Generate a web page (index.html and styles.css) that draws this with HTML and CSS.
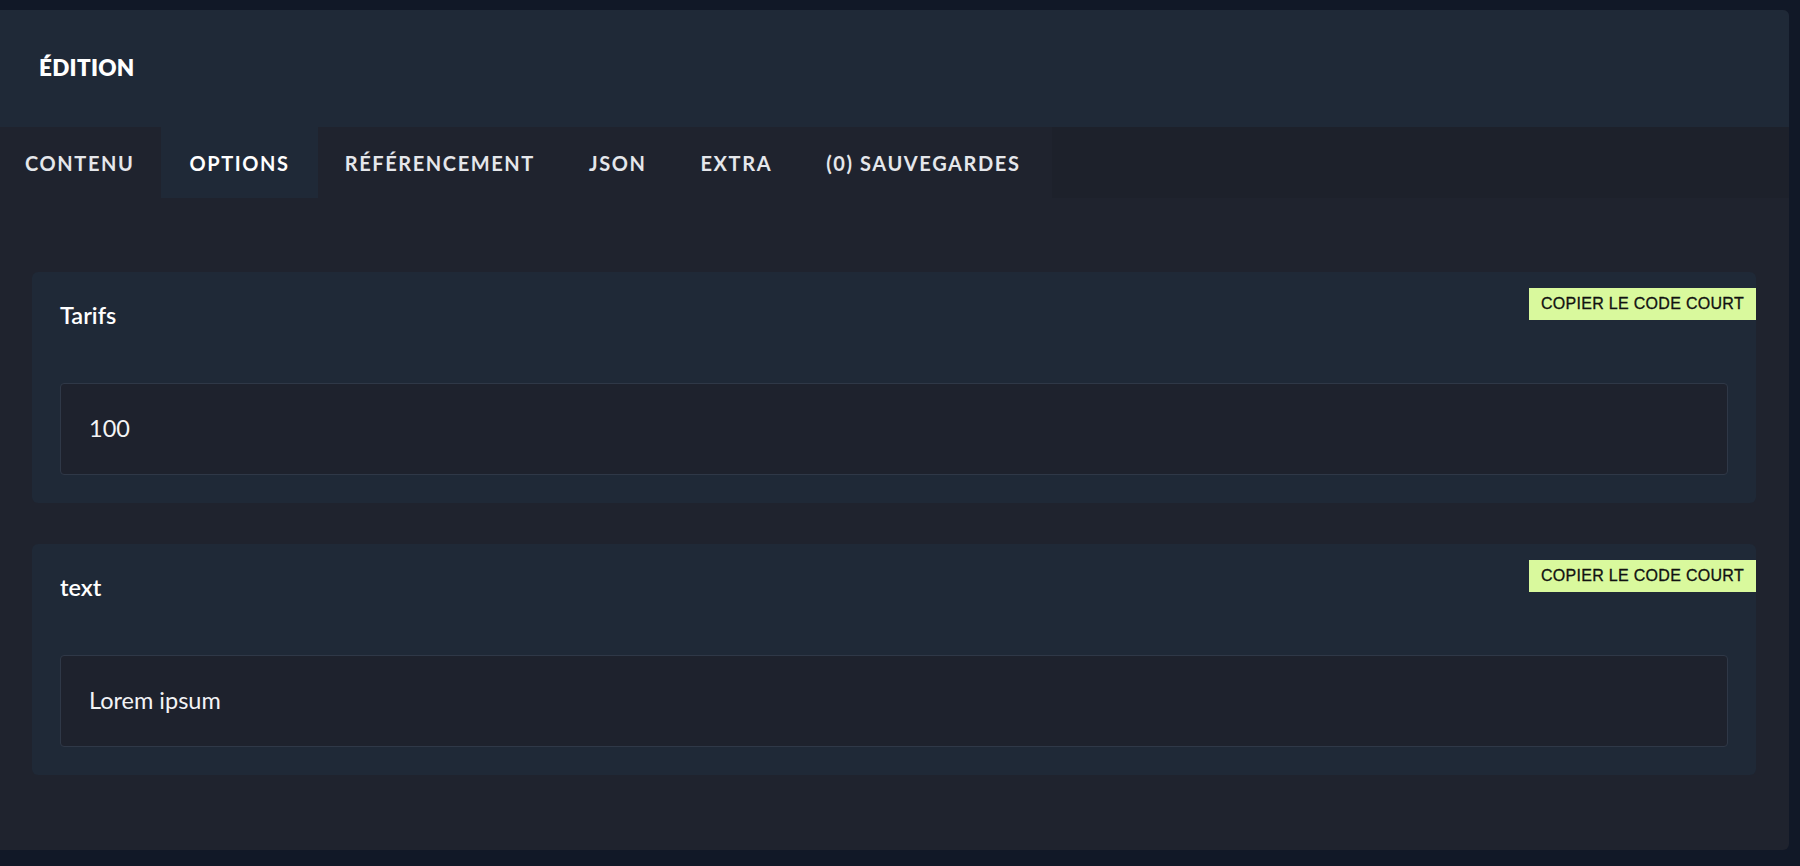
FILE: index.html
```html
<!DOCTYPE html>
<html lang="fr">
<head>
<meta charset="utf-8">
<title>Édition</title>
<link rel="stylesheet" href="styles.css">
</head>
<body>
<div class="panel">
  <div class="panel-header">
    <h1 class="panel-title">ÉDITION</h1>
  </div>
  <div class="tab-row">
    <nav class="tabs">
      <a class="tab">CONTENU</a>
      <a class="tab active">OPTIONS</a>
      <a class="tab">RÉFÉRENCEMENT</a>
      <a class="tab">JSON</a>
      <a class="tab">EXTRA</a>
      <a class="tab">(0) SAUVEGARDES</a>
    </nav>
  </div>
  <div class="content">
    <section class="field-card">
      <div class="field-label">Tarifs</div>
      <button class="copy-btn">COPIER LE CODE COURT</button>
      <div class="field-input">100</div>
    </section>
    <section class="field-card">
      <div class="field-label">text</div>
      <button class="copy-btn">COPIER LE CODE COURT</button>
      <div class="field-input">Lorem ipsum</div>
    </section>
  </div>
</div>
</body>
</html>
```
FILE: styles.css
```css
* { box-sizing: border-box; }
html, body { height: 100%; }
body {
  margin: 0;
  padding: 10px 11px 16px 0;
  background: #111827;
  font-family: Lato, "Open Sans", "Liberation Sans", sans-serif;
  color: #f3f4f6;
}
.panel {
  height: 840px;
  background: #1f232e;
  border-radius: 0 6px 6px 0;
  overflow: hidden;
  display: flex;
  flex-direction: column;
}
.panel-header {
  height: 117px;
  background: #1f2937;
  display: flex;
  align-items: center;
  padding-left: 39px;
  padding-bottom: 2px;
}
.panel-title {
  margin: 0;
  font-size: 22.5px;
  font-weight: 800;
  letter-spacing: 0.3px;
  color: #ffffff;
}
.tab-row {
  height: 71px;
  background: #1d212b;
  display: flex;
}
.tabs {
  display: flex;
  background: #1f232e;
  padding-right: 4px;
}
.tab {
  display: flex;
  align-items: center;
  padding: 0 27px;
  font-size: 20px;
  font-weight: 700;
  letter-spacing: 1.6px;
  color: #e5e7eb;
  cursor: pointer;
}
.tab:first-child { padding-left: 25px; padding-right: 27px; }
.tab.active {
  background: #1f2937;
  padding: 0 28px;
  color: #ffffff;
}
.content {
  flex: 1;
  padding: 74px 33px 0 32px;
  display: flex;
  flex-direction: column;
  gap: 41px;
}
.field-card {
  position: relative;
  background: #1f2937;
  border-radius: 6px;
  padding: 31px 28px 28px;
}
.field-label {
  font-size: 23.5px;
  font-weight: 600;
  line-height: 24px;
  color: #ffffff;
  margin-bottom: 56px;
}
.copy-btn {
  position: absolute;
  top: 16px;
  right: 0;
  height: 32px;
  padding: 0 12px;
  border: 0;
  background: #d9f99d;
  color: #111111;
  font-family: "Liberation Sans", Arial, sans-serif;
  font-size: 16px;
  font-weight: 400;
  letter-spacing: 0.3px;
  -webkit-text-stroke: 0.3px #111111;
}
.field-input {
  height: 92px;
  display: flex;
  align-items: center;
  padding: 0 28px 2px;
  background: #1e222d;
  border: 1px solid #2f3847;
  border-radius: 4px;
  font-size: 23.5px;
  color: #f3f4f6;
}
```
